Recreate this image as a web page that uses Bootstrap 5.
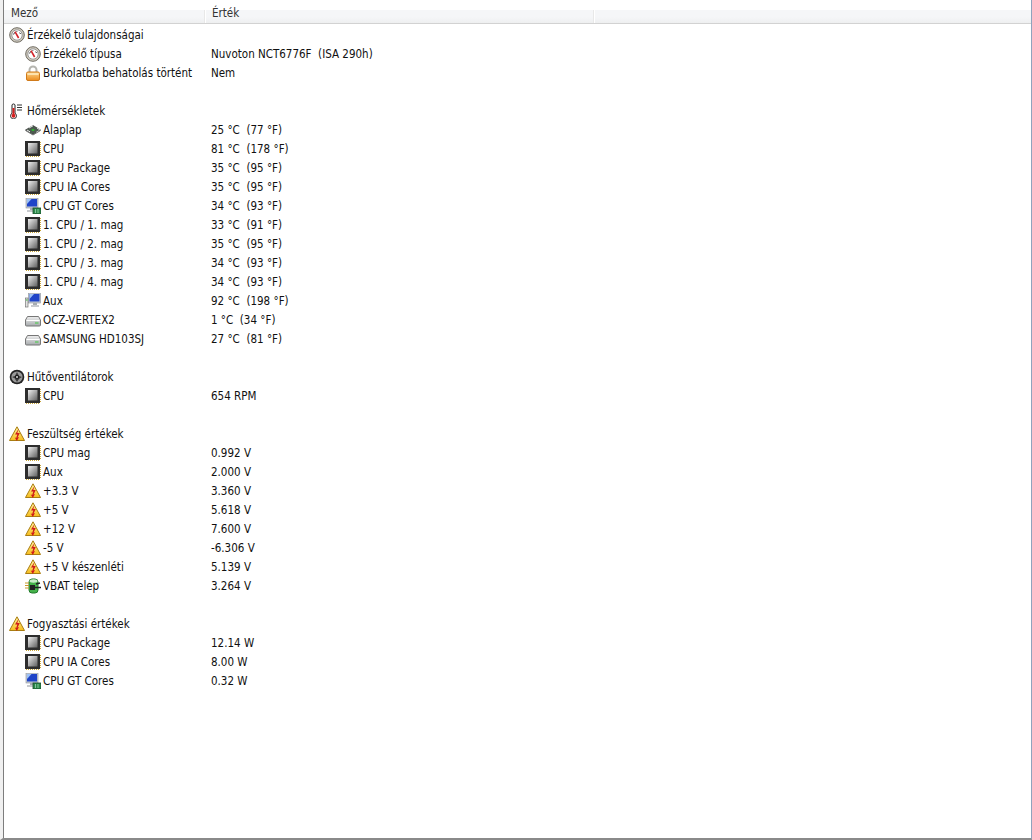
<!DOCTYPE html>
<html lang="hu"><head><meta charset="utf-8"><title>Érzékelő</title>
<link href="https://cdn.jsdelivr.net/npm/bootstrap@5.3.0/dist/css/bootstrap.min.css" rel="stylesheet">
<style>
html,body{height:100%;background:#fff}
body{font-family:"DejaVu Sans Condensed","DejaVu Sans","Liberation Sans",sans-serif;font-stretch:condensed;font-size:11.5px;line-height:19px;color:#111;overflow:hidden}
.defs{display:block;width:0;height:0}
.frame{width:1032px;height:840px;background:#fff;border-left:3px solid #f0f0f0;border-right:1px solid #8fa3bd;border-bottom:2px solid #8a8a8a}
.pane{height:100%;border-left:1px solid #7d7d7d}
.head{height:24px;padding-top:10px;background:linear-gradient(#fff 10px,#f5f6f8 10px,#f5f6f8 17px,#eeeff0 23px);border-bottom:1px solid #d2d2d2}
.hcell{height:13px;line-height:7px;padding-left:7px;color:#333}
.c1{width:201px}.c2{width:389px}
.hcell.c1,.hcell.c2{border-right:1px solid #e8e8e8;box-shadow:1px 0 0 #fff}
.rows{padding-top:2px}
.line{height:19px}
.name{width:186px;flex:none}
.kid{padding-left:21px}
.top{padding-left:5px}
.ico{width:16px;height:16px;flex:none;margin-right:2px;margin-top:-1px}
.val{white-space:pre}
</style></head><body>
<svg class="defs" aria-hidden="true"><defs>
<linearGradient id="gc" x1="0" y1="0" x2="1" y2="1"><stop offset="0" stop-color="#f0f0f0"/><stop offset="1" stop-color="#5f5f5f"/></linearGradient>
<linearGradient id="gl" x1="0" y1="0" x2="0" y2="1"><stop offset="0" stop-color="#fcd58c"/><stop offset="1" stop-color="#ec8c1e"/></linearGradient>
<linearGradient id="gw" x1="0" y1="0" x2="0" y2="1"><stop offset="0" stop-color="#fff3a0"/><stop offset="1" stop-color="#f7bd1c"/></linearGradient>
<linearGradient id="gh" x1="0" y1="0" x2="0" y2="1"><stop offset="0" stop-color="#efefef"/><stop offset="1" stop-color="#a6aaad"/></linearGradient>
<symbol id="gauge" viewBox="0 0 16 16"><circle cx="8" cy="8" r="7.300" fill="#cfcabd" stroke="#6f6b62"/><circle cx="8" cy="8" r="5.200" fill="#fff" stroke="#999"/><path d="M4.600 7.500 5.600 5.400M7.600 5 8 4.200M10.600 5.600 11.600 7" stroke="#333" fill="none"/><path d="M6 4.600 9.600 11" stroke="#d3232a" stroke-width="1.600"/></symbol>
<symbol id="lock" viewBox="0 0 16 16"><path d="M4.500 8V5a3.500 3.500 0 0 1 7 0v3" fill="none" stroke="#b5b5b0" stroke-width="2"/><rect x="1.500" y="7" width="13" height="8.500" rx="1.500" fill="url(#gl)" stroke="#d07a1a"/><rect x="2.500" y="8" width="11" height="2" fill="#fde3ae"/></symbol>
<symbol id="therm" viewBox="0 0 16 16"><path d="M3 2a1.600 1.600 0 0 1 3 0v8.300a3 3 0 1 1-3 0z" fill="#fff" stroke="#222"/><path d="M4.500 5v6" stroke="#d3201f" stroke-width="2"/><circle cx="4.500" cy="12.800" r="2" fill="#d3201f"/><path d="M8 2h5M8 4.500h5M8 7h5" stroke="#333"/></symbol>
<symbol id="mobo" viewBox="0 0 16 16"><path d="M8 3.500 15.500 8 8 12.500.5 8z" fill="#4d5a50" stroke="#222" stroke-width=".6"/><path d="M4 6 8 3.800M5 9.800 2 8M12 6l3 2M11 10.500 14 8.800" stroke="#e9e9e9"/><path d="M6.200 8 8 6.900 9.800 8 8 9.100z" fill="#27d327"/><path d="M.5 8.500 8 13l7.500-4.500" fill="none" stroke="#777"/></symbol>
<symbol id="cpu" viewBox="0 0 16 16"><rect x="0" y="0" width="15" height="15" fill="#2d2d2d"/><rect x="3" y="2" width="9.500" height="10.500" fill="url(#gc)"/><path d="M15.500 1v13" stroke="#c9a63b" stroke-dasharray="1 1"/><path d="M1 15.500h13" stroke="#c9a63b" stroke-dasharray="1 1"/></symbol>
<symbol id="gt" viewBox="0 0 16 16"><rect x="1" y="0" width="12" height="10" fill="#c6ccd4" stroke="#8b9099" stroke-width=".6"/><rect x="2" y="1" width="10" height="7.500" fill="#1f44c8"/><path d="M2 1h4.500L2 6z" fill="#9ec2f5"/><path d="M5 10h5v2H5z" fill="#a6abb0"/><rect x="2" y="12" width="7" height="2" fill="#c7cace"/><rect x="8" y="10" width="8" height="6" fill="#2c8a4a" stroke="#1b4a2b" stroke-width=".8"/><path d="M10 12h1M12.500 12h1M10 14h1M12.500 14h1" stroke="#dfe"/></symbol>
<symbol id="aux" viewBox="0 0 16 16"><rect x="3.500" y="0" width="12" height="10" fill="#c6ccd4" stroke="#8b9099" stroke-width=".6"/><rect x="4.500" y="1" width="10" height="7.500" fill="#1f44c8"/><path d="M4.500 1H9L4.500 6z" fill="#9ec2f5"/><path d="M8 10h4v2H8z" fill="#a6abb0"/><rect x="6" y="12" width="8" height="2" fill="#c7cace"/><rect x=".5" y="5" width="2.500" height="9" fill="#e2e2e2" stroke="#777" stroke-width=".7"/><path d="M1 7h1.500" stroke="#30c030" stroke-width="1.200"/></symbol>
<symbol id="hdd" viewBox="0 0 16 16"><path d="M2.500 4.500h11L15.500 8v5a1 1 0 0 1-1 1h-13a1 1 0 0 1-1-1V8z" fill="url(#gh)" stroke="#777"/><rect x="1.500" y="8" width="13" height="1" fill="#fff"/><path d="M10 11h3.500" stroke="#69c96a" stroke-width="1.500"/></symbol>
<symbol id="fan" viewBox="0 0 16 16"><circle cx="8" cy="8" r="7.300" fill="#222"/><circle cx="8" cy="8" r="5.600" fill="#9a9a9a"/><path d="M8 3 10 7H6zM3 8l4-1.500V10zM13 8l-4 2.500V6.500zM8 13l-2-3h4z" fill="#3c3c3c"/><circle cx="8" cy="8" r="2" fill="#111"/><circle cx="8" cy="8" r="1" fill="#ddd"/></symbol>
<symbol id="warn" viewBox="0 0 16 16"><path d="M8 .8 15.500 14.500H.5z" fill="url(#gw)" stroke="#a97d12" stroke-linejoin="round"/><path d="M9.500 3 6 8.500h2.300L7.200 12 5.800 11.500 7.800 15 10 11l-1.500.5L10.800 7H8.300z" fill="#cf1a1a"/></symbol>
<symbol id="batt" viewBox="0 0 16 16"><rect x="4" y="1" width="9" height="14" rx="3" fill="#45b24b" stroke="#217a2b"/><ellipse cx="8.500" cy="3" rx="4" ry="1.700" fill="#c9ecc8"/><path d="M0 5h4M0 7.500h4M0 10h4" stroke="#c99a2a"/><path d="M5 7h5v5H5z" fill="#222"/><path d="M10 9.500h6M11 6l4-1" stroke="#222" stroke-width="1.400"/></symbol>
</defs></svg>
<div class="frame"><div class="pane">
<div class="head d-flex"><div class="hcell c1">Mező</div><div class="hcell c2">Érték</div></div>
<div class="rows">
<div class="line d-flex align-items-center top"><svg class="ico"><use href="#gauge"/></svg><span>Érzékelő tulajdonságai</span></div>
<div class="line d-flex align-items-center kid"><div class="name d-flex align-items-center"><svg class="ico"><use href="#gauge"/></svg><span>Érzékelő típusa</span></div><span class="val">Nuvoton NCT6776F  (ISA 290h)</span></div>
<div class="line d-flex align-items-center kid"><div class="name d-flex align-items-center"><svg class="ico"><use href="#lock"/></svg><span>Burkolatba behatolás történt</span></div><span class="val">Nem</span></div>
<div class="line"></div>
<div class="line d-flex align-items-center top"><svg class="ico"><use href="#therm"/></svg><span>Hőmérsékletek</span></div>
<div class="line d-flex align-items-center kid"><div class="name d-flex align-items-center"><svg class="ico"><use href="#mobo"/></svg><span>Alaplap</span></div><span class="val">25 °C  (77 °F)</span></div>
<div class="line d-flex align-items-center kid"><div class="name d-flex align-items-center"><svg class="ico"><use href="#cpu"/></svg><span>CPU</span></div><span class="val">81 °C  (178 °F)</span></div>
<div class="line d-flex align-items-center kid"><div class="name d-flex align-items-center"><svg class="ico"><use href="#cpu"/></svg><span>CPU Package</span></div><span class="val">35 °C  (95 °F)</span></div>
<div class="line d-flex align-items-center kid"><div class="name d-flex align-items-center"><svg class="ico"><use href="#cpu"/></svg><span>CPU IA Cores</span></div><span class="val">35 °C  (95 °F)</span></div>
<div class="line d-flex align-items-center kid"><div class="name d-flex align-items-center"><svg class="ico"><use href="#gt"/></svg><span>CPU GT Cores</span></div><span class="val">34 °C  (93 °F)</span></div>
<div class="line d-flex align-items-center kid"><div class="name d-flex align-items-center"><svg class="ico"><use href="#cpu"/></svg><span>1. CPU / 1. mag</span></div><span class="val">33 °C  (91 °F)</span></div>
<div class="line d-flex align-items-center kid"><div class="name d-flex align-items-center"><svg class="ico"><use href="#cpu"/></svg><span>1. CPU / 2. mag</span></div><span class="val">35 °C  (95 °F)</span></div>
<div class="line d-flex align-items-center kid"><div class="name d-flex align-items-center"><svg class="ico"><use href="#cpu"/></svg><span>1. CPU / 3. mag</span></div><span class="val">34 °C  (93 °F)</span></div>
<div class="line d-flex align-items-center kid"><div class="name d-flex align-items-center"><svg class="ico"><use href="#cpu"/></svg><span>1. CPU / 4. mag</span></div><span class="val">34 °C  (93 °F)</span></div>
<div class="line d-flex align-items-center kid"><div class="name d-flex align-items-center"><svg class="ico"><use href="#aux"/></svg><span>Aux</span></div><span class="val">92 °C  (198 °F)</span></div>
<div class="line d-flex align-items-center kid"><div class="name d-flex align-items-center"><svg class="ico"><use href="#hdd"/></svg><span>OCZ-VERTEX2</span></div><span class="val">1 °C  (34 °F)</span></div>
<div class="line d-flex align-items-center kid"><div class="name d-flex align-items-center"><svg class="ico"><use href="#hdd"/></svg><span>SAMSUNG HD103SJ</span></div><span class="val">27 °C  (81 °F)</span></div>
<div class="line"></div>
<div class="line d-flex align-items-center top"><svg class="ico"><use href="#fan"/></svg><span>Hűtőventilátorok</span></div>
<div class="line d-flex align-items-center kid"><div class="name d-flex align-items-center"><svg class="ico"><use href="#cpu"/></svg><span>CPU</span></div><span class="val">654 RPM</span></div>
<div class="line"></div>
<div class="line d-flex align-items-center top"><svg class="ico"><use href="#warn"/></svg><span>Feszültség értékek</span></div>
<div class="line d-flex align-items-center kid"><div class="name d-flex align-items-center"><svg class="ico"><use href="#cpu"/></svg><span>CPU mag</span></div><span class="val">0.992 V</span></div>
<div class="line d-flex align-items-center kid"><div class="name d-flex align-items-center"><svg class="ico"><use href="#cpu"/></svg><span>Aux</span></div><span class="val">2.000 V</span></div>
<div class="line d-flex align-items-center kid"><div class="name d-flex align-items-center"><svg class="ico"><use href="#warn"/></svg><span>+3.3 V</span></div><span class="val">3.360 V</span></div>
<div class="line d-flex align-items-center kid"><div class="name d-flex align-items-center"><svg class="ico"><use href="#warn"/></svg><span>+5 V</span></div><span class="val">5.618 V</span></div>
<div class="line d-flex align-items-center kid"><div class="name d-flex align-items-center"><svg class="ico"><use href="#warn"/></svg><span>+12 V</span></div><span class="val">7.600 V</span></div>
<div class="line d-flex align-items-center kid"><div class="name d-flex align-items-center"><svg class="ico"><use href="#warn"/></svg><span>-5 V</span></div><span class="val">-6.306 V</span></div>
<div class="line d-flex align-items-center kid"><div class="name d-flex align-items-center"><svg class="ico"><use href="#warn"/></svg><span>+5 V készenléti</span></div><span class="val">5.139 V</span></div>
<div class="line d-flex align-items-center kid"><div class="name d-flex align-items-center"><svg class="ico"><use href="#batt"/></svg><span>VBAT telep</span></div><span class="val">3.264 V</span></div>
<div class="line"></div>
<div class="line d-flex align-items-center top"><svg class="ico"><use href="#warn"/></svg><span>Fogyasztási értékek</span></div>
<div class="line d-flex align-items-center kid"><div class="name d-flex align-items-center"><svg class="ico"><use href="#cpu"/></svg><span>CPU Package</span></div><span class="val">12.14 W</span></div>
<div class="line d-flex align-items-center kid"><div class="name d-flex align-items-center"><svg class="ico"><use href="#cpu"/></svg><span>CPU IA Cores</span></div><span class="val">8.00 W</span></div>
<div class="line d-flex align-items-center kid"><div class="name d-flex align-items-center"><svg class="ico"><use href="#gt"/></svg><span>CPU GT Cores</span></div><span class="val">0.32 W</span></div>
</div></div></div>
<script src="https://cdn.jsdelivr.net/npm/bootstrap@5.3.0/dist/js/bootstrap.bundle.min.js"></script>
</body></html>
